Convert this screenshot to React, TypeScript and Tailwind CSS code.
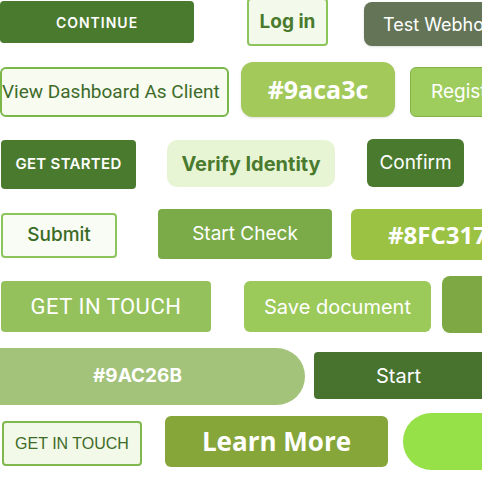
import React from 'react';

const inter = "font-['Inter',sans-serif]";
const roboto = "font-['Roboto',sans-serif]";
const arial = "font-['Liberation_Sans',Arial,sans-serif]";
const open = "font-['Open_Sans',sans-serif]";

function Btn({ className, children }: { className: string; children: React.ReactNode }) {
  return (
    <button
      type="button"
      className={`shrink-0 flex items-center whitespace-nowrap overflow-hidden ${className}`}
    >
      {children}
    </button>
  );
}

export default function App() {
  return (
    <div className="w-[482px] h-[480px] overflow-hidden bg-white flex flex-col">
      {/* row 1 */}
      <div className="flex items-start h-[46px] shrink-0">
        <Btn className={`mt-[1px] w-[194px] h-[42px] justify-center rounded-[4px] bg-[#4a7a2e] text-white text-[14px] font-semibold tracking-[1px] ${inter}`}>
          CONTINUE
        </Btn>
        <Btn className={`ml-[53px] -mt-[2px] w-[81px] h-[48px] justify-center rounded-[4px] border-2 border-[#8cc55c] bg-[#f3faeb] text-[#4a7a2e] text-[19px] font-bold ${inter}`}>
          Log in
        </Btn>
        <Btn className={`ml-[36px] mt-[2px] w-[160px] h-[44px] pl-[19px] justify-start rounded-[8px] bg-[#647557] text-white text-[18px] shadow-sm ${inter}`}>
          Test Webhook
        </Btn>
      </div>

      {/* row 2 */}
      <div className="flex items-start h-[55px] mt-[16px] shrink-0">
        <Btn className={`mt-[5px] w-[229px] h-[50px] pl-0 justify-start rounded-[6px] border-2 border-[#7ab648] bg-[#f7fbf0] text-[#3e6b2a] text-[19px] ${roboto}`}>
          View Dashboard As Client
        </Btn>
        <Btn className={`ml-[12px] w-[154px] h-[55px] justify-center rounded-[12px] bg-[#a3c95a] text-white text-[25px] font-bold shadow-sm ${open}`}>
          #9aca3c
        </Btn>
        <Btn className={`ml-[15px] mt-[5px] w-[120px] h-[50px] pl-[20px] justify-start rounded-[6px] border border-[#82b449] bg-[#9ecd5e] text-white text-[19px] ${inter}`}>
          Register
        </Btn>
      </div>

      {/* row 3 */}
      <div className="flex items-start h-[50px] mt-[22px] shrink-0">
        <Btn className={`ml-[1px] mt-[1px] w-[135px] h-[49px] justify-center rounded-[4px] bg-[#4a7a2e] text-white text-[15px] font-semibold tracking-[0.3px] ${inter}`}>
          GET STARTED
        </Btn>
        <Btn className={`ml-[31px] mt-[1px] w-[168px] h-[47px] justify-center rounded-[10px] bg-[#e8f5d5] text-[#4a7a2e] text-[20px] font-bold ${inter}`}>
          Verify Identity
        </Btn>
        <Btn className={`ml-[32px] w-[97px] h-[48px] justify-center rounded-[6px] bg-[#4a7a2e] text-white text-[19px] ${inter}`}>
          Confirm
        </Btn>
      </div>

      {/* row 4 */}
      <div className="flex items-start h-[51px] mt-[20px] shrink-0">
        <Btn className={`ml-[1px] mt-[4px] w-[116px] h-[45px] justify-center rounded-[4px] border-2 border-[#8cc55c] bg-[#f9fcf4] text-[#3a6b25] text-[19px] font-medium ${inter}`}>
          Submit
        </Btn>
        <Btn className={`ml-[41px] w-[174px] h-[50px] justify-center rounded-[4px] bg-[#7aab48] text-white text-[19px] ${inter}`}>
          Start Check
        </Btn>
        <Btn className={`ml-[19px] w-[150px] h-[51px] pl-[37px] justify-start rounded-[6px] bg-[#9cc243] text-white text-[24px] font-bold ${open}`}>
          #8FC317
        </Btn>
      </div>

      {/* row 5 */}
      <div className="flex items-start h-[57px] mt-[16px] shrink-0">
        <Btn className={`ml-[1px] mt-[5px] w-[210px] h-[51px] justify-center rounded-[4px] bg-[#94c15c] text-white text-[22px] tracking-[0.5px] ${roboto}`}>
          GET IN TOUCH
        </Btn>
        <Btn className={`ml-[33px] mt-[5px] w-[187px] h-[51px] justify-center rounded-[6px] bg-[#9cca5a] text-white text-[20px] ${inter}`}>
          Save document
        </Btn>
        <Btn className="ml-[11px] w-[60px] h-[57px] rounded-[8px] bg-[#7ea843]">
          {''}
        </Btn>
      </div>

      {/* row 6 */}
      <div className="flex items-start h-[57px] mt-[15px] shrink-0">
        <Btn className={`-ml-[30px] w-[335px] h-[57px] justify-center rounded-full bg-[#a3c37a] text-white text-[19px] font-bold ${inter}`}>
          #9AC26B
        </Btn>
        <Btn className={`ml-[9px] mt-[4px] w-[172px] h-[47px] pl-[62px] justify-start rounded-[4px] bg-[#47732f] text-white text-[20px] ${inter}`}>
          Start
        </Btn>
      </div>

      {/* row 7 */}
      <div className="flex items-start h-[57px] mt-[8px] shrink-0">
        <Btn className={`ml-[2px] mt-[8px] w-[140px] h-[45px] justify-center rounded-[4px] border-2 border-[#80b850] bg-[#f3f9e8] text-[#3d6b29] text-[16px] ${arial}`}>
          GET IN TOUCH
        </Btn>
        <Btn className={`ml-[23px] mt-[3px] w-[223px] h-[51px] justify-center rounded-[6px] bg-[#86a63a] text-white text-[26px] font-bold ${open}`}>
          Learn More
        </Btn>
        <Btn className="ml-[15px] w-[120px] h-[57px] rounded-full bg-[#96e048]">
          {''}
        </Btn>
      </div>
    </div>
  );
}
